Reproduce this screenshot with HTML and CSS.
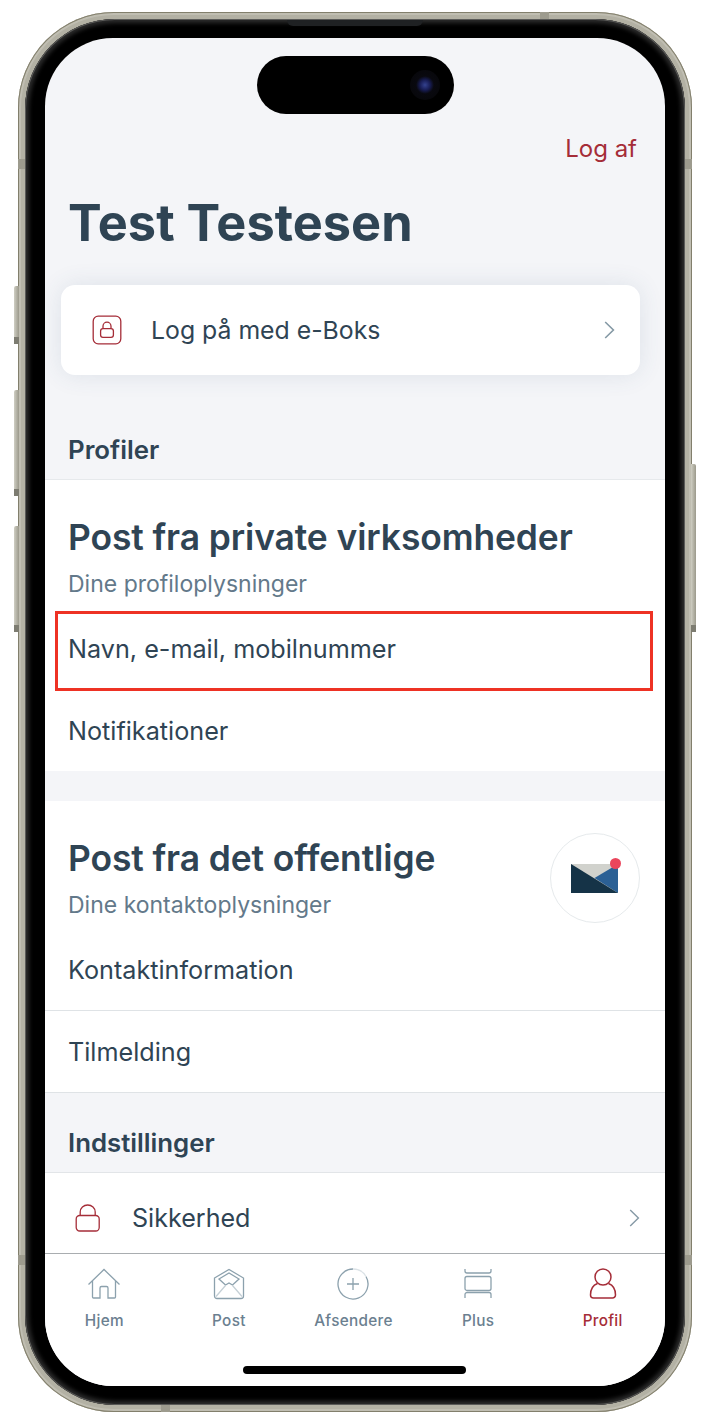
FILE: index.html
```html
<!DOCTYPE html>
<html lang="da">
<head>
  <meta charset="UTF-8" />
  <meta name="viewport" content="width=device-width, initial-scale=1.0" />
  <title>Profil</title>
  <link rel="stylesheet" href="styles.css">
</head>
<body>
  <div class="phone">
    <span class="side-btn btn-action"></span>
    <span class="side-btn btn-up"></span>
    <span class="side-btn btn-down"></span>
    <span class="side-btn btn-power"></span>
    <span class="band band-top"></span>
    <span class="band band-bottom"></span>
    <span class="band band-left-a"></span>
    <span class="band band-left-b"></span>
    <span class="band band-right-a"></span>
    <span class="band band-right-b"></span>
    <div class="bezel">
      <span class="speaker"></span>
      <div class="screen">
        <div class="island"><span class="lens"></span></div>

        <div class="content">
          <div class="top-bar"><a class="logout">Log af</a></div>
          <h1 class="name">Test Testesen</h1>

          <div class="login-card">
            <svg class="login-icon" width="30" height="30" viewBox="0 0 30 30" fill="none" stroke="#a52d38" stroke-width="1.3">
              <rect x="1.2" y="1.2" width="27.6" height="27.6" rx="5" />
              <rect x="8.6" y="13.6" width="12.8" height="8.8" rx="2.4" />
              <path d="M11 13.4v-2.2a4 4 0 0 1 8 0v2.2" />
            </svg>
            <span class="login-text">Log på med e-Boks</span>
            <svg class="chevron" width="11" height="18" viewBox="0 0 11 18" fill="none" stroke="#8599a5" stroke-width="1.6">
              <path d="M1.2 1l8.2 8-8.2 8" />
            </svg>
          </div>

          <h2 class="section-title profiles-title">Profiler</h2>

          <section class="group group-private">
            <h3 class="group-title">Post fra private virksomheder</h3>
            <p class="group-sub">Dine profiloplysninger</p>
            <div class="row row-highlight">Navn, e-mail, mobilnummer</div>
            <div class="row">Notifikationer</div>
          </section>

          <section class="group group-public">
            <div class="group-head">
              <div>
                <h3 class="group-title">Post fra det offentlige</h3>
                <p class="group-sub">Dine kontaktoplysninger</p>
              </div>
              <div class="badge">
                <svg class="badge-icon" width="50" height="36" viewBox="0 0 50 36">
                  <rect x="1" y="4" width="47" height="29" fill="#d1d2cd" />
                  <path d="M48 4v29L24.5 18z" fill="#2b6095" />
                  <path d="M1 4l47 29H1z" fill="#153347" />
                  <circle cx="45.500" cy="3.500" r="5.500" fill="#ea455c" />
                </svg>
              </div>
            </div>
            <div class="row row-line">Kontaktinformation</div>
            <div class="row row-line">Tilmelding</div>
          </section>

          <h2 class="section-title settings-title">Indstillinger</h2>

          <div class="settings-row">
            <svg class="settings-icon" width="26" height="28" viewBox="0 0 26 28" fill="none" stroke="#a52d38" stroke-width="1.3">
              <rect x="1.200" y="11.500" width="23" height="15.500" rx="3.500" />
              <path d="M5.200 11.500V8a7.500 7 0 0 1 15 0v3.500" />
            </svg>
            <span class="settings-text">Sikkerhed</span>
            <svg class="chevron" width="11" height="18" viewBox="0 0 11 18" fill="none" stroke="#8599a5" stroke-width="1.4">
              <path d="M1.200 1l8.200 8-8.200 8" />
            </svg>
          </div>
        </div>

        <nav class="tabbar">
          <div class="tab">
            <svg width="34" height="32" viewBox="0 0 34 32" fill="none" stroke="#8ca1ad" stroke-width="1.300">
              <path d="M1.500 16.500L17 1.500l15.500 15" />
              <path d="M5.500 13v16a1 1 0 0 0 1 1H13V20a1.500 1.500 0 0 1 1.500-1.500h5A1.500 1.500 0 0 1 21 20v10h6.500a1 1 0 0 0 1-1V13" />
            </svg>
            <span>Hjem</span>
          </div>
          <div class="tab">
            <svg width="32" height="32" viewBox="0 0 32 32" fill="none" stroke="#8ca1ad" stroke-width="1.300">
              <path d="M1.500 10L16 1.500 30.500 10v18a2.500 2.500 0 0 1-2.500 2.500H4A2.500 2.500 0 0 1 1.500 28z" />
              <path d="M6 11l10-6 10 6-6.500 6-3.500-2-3.500 2z" />
              <path d="M12.500 17.500L3 28.500M19.500 17.500L29 28.500" stroke="#c5d0d6" />
            </svg>
            <span>Post</span>
          </div>
          <div class="tab">
            <svg width="32" height="32" viewBox="0 0 32 32" fill="none" stroke="#8ca1ad" stroke-width="1.300">
              <path d="M16 1A15 15 0 1 0 29 8.500" />
              <path d="M16 1A15 15 0 0 1 29 8.500" stroke="#dce3e7" />
              <path d="M16 10v12M10 16h12" />
            </svg>
            <span>Afsendere</span>
          </div>
          <div class="tab">
            <svg width="28" height="32" viewBox="0 0 28 32" fill="none" stroke="#8ca1ad" stroke-width="1.300">
              <rect x="1" y="8.500" width="26" height="14" rx="2" />
              <path d="M1 1v2a2 2 0 0 0 2 2h22a2 2 0 0 0 2-2V1M1 30v-3.500a2 2 0 0 1 2-2h22a2 2 0 0 1 2 2V30" />
            </svg>
            <span>Plus</span>
          </div>
          <div class="tab tab-active">
            <svg width="28" height="32" viewBox="0 0 28 32" fill="none" stroke="#a52d38" stroke-width="1.500">
              <circle cx="14" cy="9" r="8" />
              <path d="M8.500 15.500C4.500 17 1.500 21 1.500 27a3 3 0 0 0 3 3h19a3 3 0 0 0 3-3c0-6-3-10-7-11.500" />
            </svg>
            <span>Profil</span>
          </div>
        </nav>
        <span class="home-bar"></span>
      </div>
    </div>
  </div>
</body>
</html>
```

FILE: styles.css
```css
* {
  box-sizing: border-box;
}
html, body {
  height: 100%;
}
body {
  margin: 0;
  padding: 12px 18px;
  background: #fff;
  font-family: Inter, "Liberation Sans", sans-serif;
  color: #2f4454;
}
h1, h2, h3, p {
  margin: 0;
}

/* phone frame */
.phone {
  position: relative;
  width: 674px;
  height: 1400px;
  padding: 7px;
  border-radius: 96px;
  background: #b3b1a4;
  box-shadow: inset 0 0 0 1px #827f6c, inset 0 0 0 3px #c0beb2;
}
.bezel {
  position: relative;
  height: 100%;
  padding: 19px 20px;
  border-radius: 90px;
  background: #000;
  box-shadow: inset 0 0 0 1px #5a5a58, inset 0 0 4px 4px #2c2c2c;
}
.speaker {
  position: absolute;
  top: 1px;
  left: 262px;
  width: 136px;
  height: 6px;
  border-radius: 0 0 6px 6px;
  background: #1f2123;
}
.side-btn {
  position: absolute;
  width: 5px;
  background: linear-gradient(90deg, #cfcec3, #9b998b);
  border-radius: 2px 0 0 2px;
}
.side-btn::after {
  content: "";
  position: absolute;
  left: 0;
  right: 0;
  bottom: 0;
  height: 7px;
  background: #7d7c71;
}
.btn-action { left: -4px; top: 274px; height: 58px; }
.btn-up { left: -4px; top: 378px; height: 106px; }
.btn-down { left: -4px; top: 514px; height: 106px; }
.btn-power {
  right: -4px;
  top: 452px;
  height: 168px;
  border-radius: 0 2px 2px 0;
}

/* antenna lines on the frame */
.band {
  position: absolute;
  background: #9d9b8e;
}
.band-top { top: 0; left: 522px; width: 9px; height: 7px; }
.band-bottom { bottom: 0; left: 143px; width: 9px; height: 7px; }
.band-left-a { left: 0; top: 147px; width: 8px; height: 10px; }
.band-left-b { left: 0; top: 1243px; width: 8px; height: 10px; }
.band-right-a { right: 0; top: 147px; width: 8px; height: 10px; }
.band-right-b { right: 0; top: 1243px; width: 8px; height: 10px; }

/* screen */
.screen {
  position: relative;
  display: flex;
  flex-direction: column;
  height: 100%;
  border-radius: 68px;
  overflow: hidden;
  background: #f4f5f8;
}
.island {
  position: absolute;
  top: 18px;
  left: 212px;
  width: 197px;
  height: 58px;
  border-radius: 29px;
  background: #000;
}
.lens {
  position: absolute;
  top: 14px;
  right: 14px;
  width: 30px;
  height: 30px;
  border-radius: 50%;
  background: radial-gradient(circle, #34428f 0, #181d55 24%, #09090f 42%, #060608 100%);
}
.content {
  flex: 1;
  min-height: 0;
  overflow: hidden;
}
.top-bar {
  display: flex;
  justify-content: flex-end;
  padding: 96px 28px 0 0;
}
.logout {
  font-size: 24px;
  line-height: 30px;
  color: #a52d38;
}
.name {
  margin: 27px 0 0 23px;
  font-size: 50.5px;
  line-height: 64px;
  font-weight: 700;
}

/* login card */
.login-card {
  display: flex;
  align-items: center;
  height: 90px;
  margin: 30px 25px 0 16px;
  padding: 0 25px 0 31px;
  border-radius: 14px;
  background: #fff;
  box-shadow: 0 0 24px rgba(60, 90, 120, 0.12);
}
.login-text {
  flex: 1;
  margin-left: 29px;
  font-size: 24.8px;
}

.section-title {
  padding-left: 23px;
  font-size: 25.8px;
  line-height: 30px;
  font-weight: 600;
}
.profiles-title {
  margin-top: 60px;
  padding-bottom: 14px;
}
.settings-title {
  padding-top: 35px;
  padding-bottom: 14px;
}

/* groups */
.group {
  background: #fff;
  padding-left: 23px;
}
.group-private {
  height: 292px;
  border-top: 1px solid #e6e9ec;
  padding-top: 36px;
}
.group-public {
  margin-top: 30px;
  padding-top: 36px;
}
.group-title {
  font-size: 35.4px;
  line-height: 44px;
  font-weight: 600;
  letter-spacing: -0.1px;
}
.group-sub {
  margin-top: 9px;
  font-size: 23px;
  line-height: 30px;
  color: #63798a;
}
.row {
  display: flex;
  align-items: center;
  height: 82px;
  font-size: 25.2px;
}
.group-private .row:first-of-type {
  margin-top: 9px;
}
.row-line {
  margin-left: -23px;
  padding-left: 23px;
  border-bottom: 1px solid #dfe3e6;
}
.group-head {
  display: flex;
  justify-content: space-between;
  align-items: flex-start;
  padding-right: 25px;
  height: 92px;
}
.badge {
  display: flex;
  align-items: center;
  justify-content: center;
  flex-shrink: 0;
  width: 90px;
  height: 90px;
  margin-top: -4px;
  border: 1px solid #e6eaec;
  border-radius: 50%;
}
.badge-icon {
  overflow: visible;
}

/* red marker round the highlighted row */
.row-highlight {
  position: relative;
}
.row-highlight::after {
  content: "";
  position: absolute;
  top: 3px;
  left: -13px;
  width: 598px;
  height: 80px;
  box-sizing: border-box;
  border: 3px solid #ee3224;
}

.settings-row {
  display: flex;
  align-items: center;
  height: 92px;
  padding: 0 25px 2px 30px;
  background: #fff;
  border-top: 1px solid #e2e5e8;
}
.settings-text {
  flex: 1;
  margin-left: 31px;
  font-size: 25.1px;
}

/* tab bar */
.tabbar {
  display: flex;
  flex-shrink: 0;
  height: 133px;
  padding: 14px 0 0;
  background: #fff;
  border-top: 1px solid #a9adb0;
}
.tab {
  flex: none;
  width: 124.6px;
  display: flex;
  flex-direction: column;
  align-items: center;
  gap: 11px;
  font-size: 15.3px;
  line-height: 20px;
  font-weight: 500;
  letter-spacing: 0.3px;
  color: #6b8090;
}
.tab:first-child {
  margin-left: -3px;
}
.tab svg {
  height: 32px;
}
.tab-active {
  color: #a52d38;
}
.home-bar {
  position: absolute;
  left: 198px;
  bottom: 12px;
  width: 223px;
  height: 8px;
  border-radius: 4px;
  background: #000;
}
```
